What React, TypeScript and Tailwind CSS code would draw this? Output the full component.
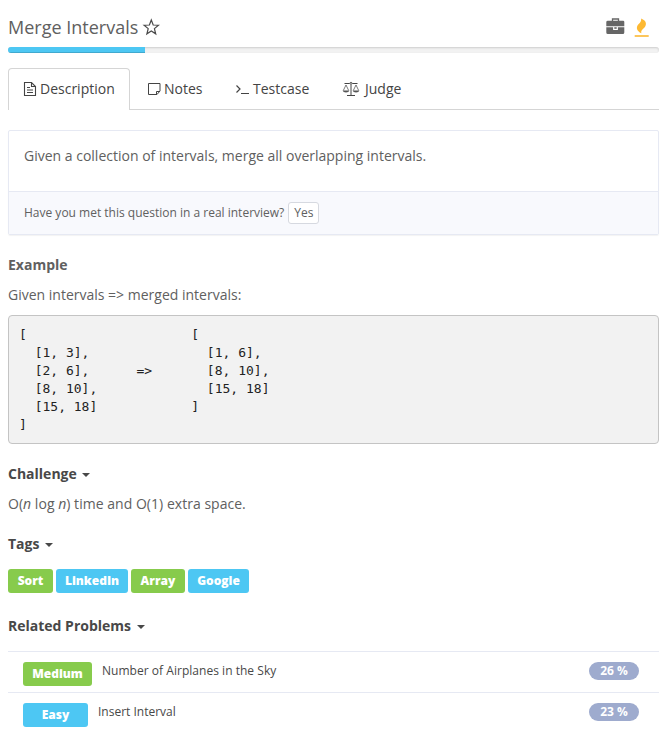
import type { ReactNode } from 'react';

function StarIcon() {
  return (
    <svg width="18" height="18" viewBox="0 0 18 18" fill="none" stroke="#4a4a4a" strokeWidth="1.2">
      <path d="M9.300 2 11.200 7 16.500 7.200 12.400 10.600 13.700 15.800 9.300 12.900 4.900 15.800 6.200 10.600 2.100 7.200 7.400 7Z" />
    </svg>
  );
}

function BriefcaseIcon() {
  return (
    <svg width="20" height="18" viewBox="0 0 20 18" fill="#666">
      <path d="M6.500 4V2H12.500V4" fill="none" stroke="#666" strokeWidth="1.3" />
      <path d="M1.900 3.700H17.100Q18.300 3.700 18.300 5V9.300H.3V5Q.3 3.700 1.900 3.700Z" />
      <path d="M.3 10.300H7.100V13H11.900V10.300H18.300V15.500Q18.300 17 16.800 17H1.800Q.3 17 .3 15.500Z" />
      <path d="M8.300 10.200H10.700V11.800H8.300Z" />
    </svg>
  );
}

function FlameIcon() {
  return (
    <svg width="16" height="20" viewBox="0 0 16 20">
      <path d="M7 1.500C8 5 4.500 6.500 3.300 9C2 12 4 14.700 7.500 16.300C6.300 13.500 9.500 12 11.200 9.500C13.200 6.300 11.300 3 7 1.500Z" fill="#fdb933" />
      <rect x=".7" y="18" width="14" height="2" fill="#fcc65c" />
    </svg>
  );
}

function FileIcon() {
  return (
    <svg width="14" height="16" viewBox="0 0 14 16" fill="none" stroke="#444" strokeWidth="1.1">
      <path d="M1.500 1.500H8.500L12.500 5.500V14.500H1.500ZM8.500 1.500V5.500H12.500M4 6.500H7M4 9H10M4 11.500H10" />
    </svg>
  );
}

function NoteIcon() {
  return (
    <svg width="14" height="16" viewBox="0 0 14 16" fill="none" stroke="#444" strokeWidth="1">
      <path d="M13 2.500V10L10 13.500H1.500V2.500ZM9.500 13.500V10.500H13" />
    </svg>
  );
}

function TerminalIcon() {
  return (
    <svg width="15" height="16" viewBox="0 0 15 16" fill="none" stroke="#444" strokeWidth="1.2">
      <path d="M1.500 4.500 5 8 1.500 11.500M6 12.500H14" />
    </svg>
  );
}

function ScaleIcon() {
  return (
    <svg width="18" height="16" viewBox="0 0 18 16" fill="none" stroke="#444">
      <path d="M2.500 2.500H7.700M10.300 2.500H15.500M9 3.500V14M5 14.500H13" />
      <circle cx="9" cy="2.300" r="1" strokeWidth=".9" />
      <path d="M1.300 9.500 4 4 6.700 9.500M11.300 9.500 14 4 16.700 9.500" strokeWidth=".7" />
      <path d="M.7 9.500H7.300Q7 11.500 4 11.500T.7 9.500ZM10.700 9.500H17.300Q17 11.500 14 11.500T10.700 9.500Z" fill="#555" stroke="none" />
    </svg>
  );
}

function Heading({ children, className }: { children: ReactNode; className: string }) {
  return (
    <h2 className={`flex items-center text-[14px] font-bold leading-5 text-[#484848] ${className}`}>
      {children}
      <span className="ml-[5.5px] mt-[2px] border-x-4 border-t-4 border-x-transparent border-t-[#484848]" />
    </h2>
  );
}

function Tag({ children, className }: { children: ReactNode; className: string }) {
  return (
    <span className={`flex h-6 items-center justify-center rounded-[3px] text-[12px] font-extrabold leading-none text-white ${className}`}>
      {children}
    </span>
  );
}

const tabs = [
  { label: 'Notes', icon: <NoteIcon />, className: 'ml-[17px] w-[88px]', gap: 'ml-[3px]' },
  { label: 'Testcase', icon: <TerminalIcon />, className: 'w-[107px]', gap: 'ml-[3px]' },
  { label: 'Judge', icon: <ScaleIcon />, className: '', gap: 'ml-[5px]' },
];

const code = `[                     [
  [1, 3],               [1, 6],
  [2, 6],      =>       [8, 10],
  [8, 10],              [15, 18]
  [15, 18]            ]
]`;

export default function App() {
  return (
    <main className="h-[754px] w-[668px] overflow-hidden bg-white pl-2 pr-[9px] font-['Open_Sans',sans-serif] text-[#606060]">
      <header className="flex h-[47px] items-start justify-between pt-[15px]">
        <h1 className="flex items-center text-[18px] leading-6">
          Merge Intervals
          <span className="ml-[4px]"><StarIcon /></span>
        </h1>
        <div className="mr-[9px] mt-[2px] flex items-start gap-[8px]">
          <BriefcaseIcon />
          <FlameIcon />
        </div>
      </header>
      <div className="h-[6px] overflow-hidden rounded-[3px] bg-[#f2f2f2] shadow-[inset_0_1px_2px_rgba(0,0,0,0.15)]">
        <div className="h-full w-[137px] bg-[#4dc7f3] shadow-[inset_0_-1px_0_rgba(0,0,0,0.15)]" />
      </div>

      <nav className="mt-[15px] flex h-[42px] border-b border-[#d5d5d5] text-[14px] text-[#444]">
        <div className="-mb-px flex w-[122px] items-center rounded-t-[4px] border border-b-0 border-[#d5d5d5] bg-white pb-[2px] pl-[14px]">
          <FileIcon />
          <span className="ml-[3px]">Description</span>
        </div>
        {tabs.map((tab) => (
          <div key={tab.label} className={`flex items-center ${tab.className}`}>
            {tab.icon}
            <span className={tab.gap}>{tab.label}</span>
          </div>
        ))}
      </nav>

      <section className="mt-5 h-[105px] rounded-[2px] border border-[#e6e9f3] shadow-[0_1px_1px_rgba(0,0,0,0.05)]">
        <p className="h-[60px] pl-[15px] pt-[15px] text-[14px] leading-5">
          Given a collection of intervals, merge all overlapping intervals.
        </p>
        <div className="flex h-[43px] items-center border-t border-[#e6e9f3] bg-[#f8f9fd] pb-px pl-[15px] text-[12px]">
          Have you met this question in a real interview?
          <button className="ml-1 h-[22px] w-[31px] rounded-[3px] border border-[#d6d9e0] bg-white text-[12px] leading-5">Yes</button>
        </div>
      </section>

      <h2 className="mt-5 text-[14px] font-bold leading-5">Example</h2>
      <p className="mt-[10px] text-[14px] leading-5">Given intervals =&gt; merged intervals:</p>
      <pre className="mt-[10px] h-[129px] rounded-[4px] border border-[#c4c4c4] bg-[#f2f2f2] pl-[10px] pt-[10px] font-['DejaVu_Sans_Mono',monospace] text-[13px] leading-[18px] text-[#222]">
        {code}
      </pre>

      <Heading className="mt-5">Challenge</Heading>
      <p className="mt-[10px] text-[14px] leading-5 tracking-[0.03px]">
        O(<em>n</em> log <em>n</em>) time and O(1) extra space.
      </p>

      <Heading className="mt-5">Tags</Heading>
      <div className="mt-[15px] flex gap-[3px]">
        <Tag className="w-[45px] bg-[#87cb4c]">Sort</Tag>
        <Tag className="w-[72px] bg-[#4dc7f3]">LinkedIn</Tag>
        <Tag className="w-[54px] bg-[#87cb4c]">Array</Tag>
        <Tag className="w-[61px] bg-[#4dc7f3]">Google</Tag>
      </div>

      <Heading className="mt-[23px]">Related Problems</Heading>
      <ul className="mt-[15px] text-[12px] text-[#484848]">
        <li className="flex h-[41px] items-start border-t border-[#e6e9f3] pl-[15px] pr-5 pt-[10px]">
          <Tag className="w-[69px] bg-[#87cb4c]">Medium</Tag>
          <span className="ml-[10px] flex-1 leading-[18px] tracking-[0.03px]">Number of Airplanes in the Sky</span>
          <span className="h-[18px] w-[50px] rounded-full bg-[#9eabce] text-center font-bold leading-[18px] text-white">26 %</span>
        </li>
        <li className="flex h-[41px] items-start border-t border-[#e6e9f3] pl-[15px] pr-5 pt-[10px]">
          <Tag className="w-[65px] bg-[#4dc7f3]">Easy</Tag>
          <span className="ml-[10px] flex-1 leading-[18px]">Insert Interval</span>
          <span className="h-[18px] w-[50px] rounded-full bg-[#9eabce] text-center font-bold leading-[18px] text-white">23 %</span>
        </li>
      </ul>
    </main>
  );
}
